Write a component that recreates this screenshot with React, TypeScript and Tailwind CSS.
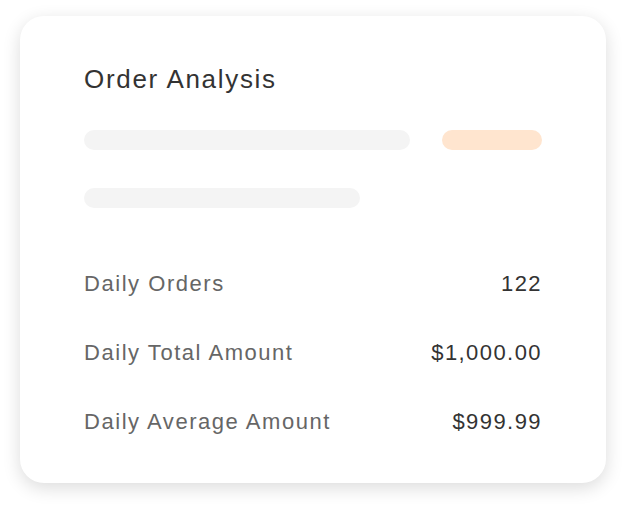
const rows = [
  { label: 'Daily Orders', value: '122' },
  { label: 'Daily Total Amount', value: '$1,000.00' },
  { label: 'Daily Average Amount', value: '$999.99' },
];

export default function App() {
  return (
    <div className="min-h-screen bg-white pl-5 pt-4 font-['Liberation_Sans',Arial,sans-serif]">
      <div className="w-[586px] rounded-[24px] bg-white px-16 pt-[47px] pb-[46px] shadow-[0_5px_18px_rgba(0,0,0,0.14)]">
        <h1 className="text-[26px] leading-8 tracking-[0.065em] text-[#333333]">Order Analysis</h1>

        <div className="mt-[35px] flex gap-8">
          <div className="h-5 w-[326px] rounded-full bg-[#f4f4f4]" />
          <div className="h-5 w-[100px] rounded-full bg-[#ffe5cf]" />
        </div>
        <div className="mt-[38px] h-5 w-[276px] rounded-full bg-[#f4f4f4]" />

        <div className="mt-[61px] flex flex-col gap-[39px]">
          {rows.map((row) => (
            <div key={row.label} className="flex items-center justify-between text-[22px] leading-[30px]">
              <span className="tracking-[0.07em] text-[#666666]">{row.label}</span>
              <span className="tracking-[0.065em] text-[#333333]">{row.value}</span>
            </div>
          ))}
        </div>
      </div>
    </div>
  );
}
